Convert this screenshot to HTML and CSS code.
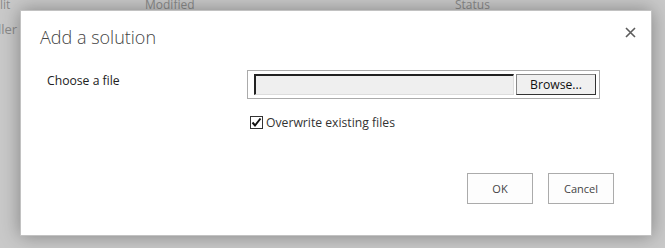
FILE: index.html
```html
<!DOCTYPE html>
<html>
<head>
<meta charset="utf-8">
<link rel="stylesheet" href="styles.css">
</head>
<body>
<div class="page">
  <div class="bg-head">
    <span class="c1">lit</span>
    <span class="c2">Modified</span>
    <span class="c3">Status</span>
  </div>
  <div class="bg-row">ller</div>
</div>
<div class="dialog">
  <div class="title-bar">
    <h1 class="title">Add a solution</h1>
    <svg class="close" width="11" height="11" viewBox="0 0 11 11"><path d="M1 1L10 10M10 1L1 10" stroke="#5c5c5c" stroke-width="1.6"/></svg>
  </div>
  <div class="form-row">
    <div class="label">Choose a file</div>
    <div class="file-box">
      <div class="file-input"></div>
      <div class="browse">Browse...</div>
    </div>
  </div>
  <div class="check-row">
    <svg class="check" width="13" height="13" viewBox="0 0 13 13"><rect x="0.5" y="0.5" width="12" height="12" fill="#fff" stroke="#333"/><path d="M2.5 6.5L5 9.5L10.5 2.5" fill="none" stroke="#111" stroke-width="2"/></svg>
    <span class="check-label">Overwrite existing files</span>
  </div>
  <div class="actions">
    <button class="btn">OK</button>
    <button class="btn">Cancel</button>
  </div>
</div>
</body>
</html>
```
FILE: styles.css
```css
html, body {
  margin: 0;
  padding: 0;
  width: 665px;
  height: 248px;
  overflow: hidden;
  background: #c9c9c9;
  font-family: "Open Sans", "Noto Sans", sans-serif;
}
.page {
  color: #8a8a8a;
  font-size: 12px;
}
.bg-head {
  display: flex;
  height: 12px;
  line-height: 9px;
  overflow: hidden;
}
.bg-head span { display: block; }
.c1 { width: 145px; }
.c2 { width: 310px; }
.bg-row {
  padding-top: 8px;
  margin-left: -2px;
  font-size: 13px;
}
.dialog {
  position: absolute;
  left: 20px;
  top: 10px;
  width: 630px;
  height: 224px;
  background: #fff;
  border: 1px solid #c2c2c2;
  box-shadow: 0 0 18px rgba(0,0,0,0.35);
}
.title-bar {
  display: flex;
  justify-content: space-between;
  align-items: flex-start;
  padding: 13px 15px 0 19px;
}
.title {
  margin: 0;
  font-size: 18px;
  font-weight: 300;
  color: #444;
  line-height: 26px;
}
.close {
  margin-top: 3px;
}
.form-row {
  display: flex;
  padding: 22px 0 0 26px;
}
.label {
  width: 200px;
  font-size: 12.2px;
  color: #222;
  line-height: 18px;
}
.file-box {
  display: flex;
  gap: 2px;
  width: 342px;
  height: 21px;
  border: 1px solid #ababab;
  padding: 3px 3px 3px 6px;
  margin-top: -2px;
}
.file-input {
  flex: 1;
  background: #efefef;
  border-top: 2px solid #222;
  border-left: 2px solid #222;
  border-bottom: 1px solid #ddd;
  border-right: 1px solid #ddd;
}
.browse {
  width: 78px;
  border: 1px solid #888;
  border-right-color: #333;
  border-bottom-color: #333;
  background: #f0f0f0;
  font-size: 12.2px;
  text-align: center;
  line-height: 19px;
  color: #111;
}
.check-row {
  display: flex;
  align-items: center;
  gap: 3px;
  padding: 15px 0 0 229px;
}
.check-label {
  font-size: 12.2px;
  color: #333;
}
.actions {
  display: flex;
  justify-content: flex-end;
  gap: 15px;
  padding: 42px 37px 0 0;
}
.btn {
  width: 66px;
  height: 31px;
  border: 1px solid #ababab;
  background: #fdfdfd;
  font-family: inherit;
  font-size: 11px;
  color: #444;
  padding: 0;
}
```
